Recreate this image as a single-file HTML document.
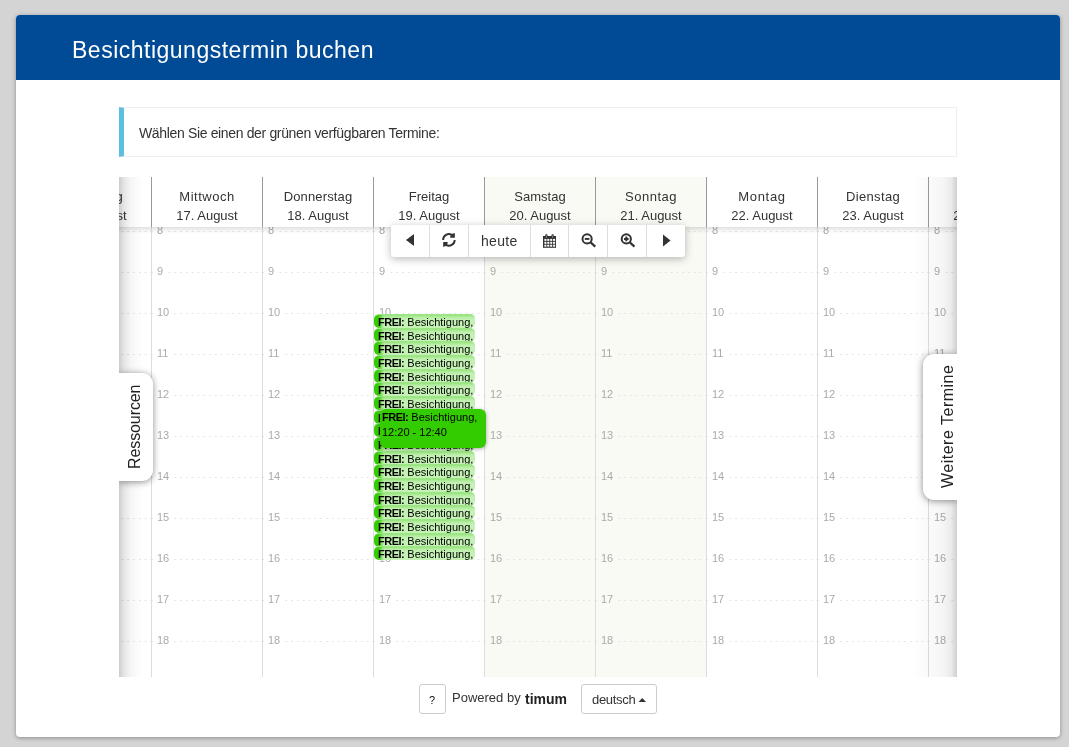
<!DOCTYPE html>
<html><head><meta charset="utf-8"><style>
*{box-sizing:border-box}
html,body{margin:0;padding:0}
body{width:1069px;height:747px;background:#d4d4d4;position:relative;overflow:hidden;will-change:transform;font-family:"Liberation Sans", sans-serif;color:#333}
.card{position:absolute;left:16px;top:15px;width:1044px;height:722px;background:#fff;border-radius:4px;box-shadow:0 1px 4px rgba(0,0,0,.35)}
.hdr{position:absolute;left:0;top:0;width:1044px;height:65px;background:#004a96;border-radius:4px 4px 0 0}
.title{position:absolute;left:56px;top:21px;font-size:23px;line-height:28px;color:#fff;white-space:nowrap;letter-spacing:0.5px}
.info{position:absolute;left:119px;top:107px;width:838px;height:50px;border:1px solid #eee;border-left:5px solid #5bc0de;background:#fff}
.info span{position:absolute;left:15px;top:16px;font-size:14px;line-height:18px;letter-spacing:-0.35px;color:#333;white-space:nowrap}
.cal{position:absolute;left:119px;top:177px;width:838px;height:500px;overflow:hidden;background:#fff}
.wk{position:absolute;top:0;width:111px;height:500px;background:#f9faf4}
.hd{position:absolute;top:0;width:111px;height:50px;border-left:1px solid #999;text-align:center;font-size:13px;color:#333}
.hd .d1{position:absolute;left:0;right:0;top:12px;line-height:16px}
.hd .d2{position:absolute;left:0;right:0;top:30.5px;line-height:16px}
.body{position:absolute;left:0;top:50px;width:838px;height:450px;overflow:hidden}
.hl{position:absolute;width:111px;height:1px;background-image:linear-gradient(to right,#e5e5e5 0,#e5e5e5 2px,transparent 2px);background-size:5.82px 1px;background-position:0 0}
.vl{position:absolute;top:0;width:1px;height:450px;background:#ddd}
.lb{position:absolute;font-size:11px;line-height:14px;color:#aaa;padding-right:3px}
.hshadow{position:absolute;left:0;top:50px;width:838px;height:7px;background:linear-gradient(to bottom,rgba(0,0,0,.12),rgba(0,0,0,.03) 4px,rgba(0,0,0,0))}
.lsh{position:absolute;left:0;top:0;width:24px;height:500px;background:linear-gradient(to right,rgba(0,0,0,.2) 0,rgba(0,0,0,.1) 5px,rgba(0,0,0,.035) 12px,rgba(0,0,0,0) 24px)}
.rsh{position:absolute;right:0;top:0;width:45px;height:500px;background:linear-gradient(to left,rgba(0,0,0,.19) 0,rgba(0,0,0,.08) 6px,rgba(0,0,0,.035) 15px,rgba(0,0,0,.015) 32px,rgba(0,0,0,0) 45px)}
.ev{position:absolute;left:255px;width:101px;height:14px;border-radius:5px;background:linear-gradient(to bottom,rgba(60,200,20,.35) 0,rgba(60,200,20,.12) 2px,rgba(60,200,20,0) 4px),linear-gradient(to right,#33cc00 0,#33cc00 4px,#c4f1b4 10px);border-top:1px solid #9be585;font-size:11px;line-height:12px;color:#000;padding-left:4px;padding-top:1px;white-space:nowrap;overflow:hidden}
.ev b,.evh b{letter-spacing:-0.5px}
.evh{position:absolute;left:261px;width:106px;height:39px;border-radius:6px;background:#33cc00;font-size:11px;line-height:14.5px;color:#000;padding-left:2px;padding-top:1px;white-space:nowrap;box-shadow:0 1px 4px rgba(0,0,0,.35)}
.tb{position:absolute;left:391px;top:225px;width:294px;height:32px;background:#fff;border-radius:3px;box-shadow:0 2px 8px rgba(0,0,0,.28)}
.tb div{position:absolute;top:0;height:32px;border-left:1px solid #ddd}
.tab{position:absolute;background:#fff;box-shadow:0 1px 7px rgba(0,0,0,.45)}
.tab span{position:absolute;font-size:16px;line-height:18px;color:#222;white-space:nowrap;transform-origin:0 0}
.btn{position:absolute;top:684px;height:30px;border:1px solid #ccc;border-radius:3px;background:#fff}
</style></head><body>
<div class="card"><div class="hdr"><div class="title">Besichtigungstermin buchen</div></div></div>
<div class="info"><span>Wählen Sie einen der grünen verfügbaren Termine:</span></div>
<div class="cal">
<div class="hd" style="left:-79px"><div class="d1" style="letter-spacing:0.35px">Dienstag</div><div class="d2">16. August</div></div><div class="hd" style="left:32px"><div class="d1" style="letter-spacing:0.5px">Mittwoch</div><div class="d2">17. August</div></div><div class="hd" style="left:143px"><div class="d1" style="letter-spacing:0.15px">Donnerstag</div><div class="d2">18. August</div></div><div class="hd" style="left:254px"><div class="d1" style="letter-spacing:0px">Freitag</div><div class="d2">19. August</div></div><div class="wk" style="left:365px"></div><div class="hd" style="left:365px"><div class="d1" style="letter-spacing:0px">Samstag</div><div class="d2">20. August</div></div><div class="wk" style="left:476px"></div><div class="hd" style="left:476px"><div class="d1" style="letter-spacing:0.5px">Sonntag</div><div class="d2">21. August</div></div><div class="hd" style="left:587px"><div class="d1" style="letter-spacing:0.7px">Montag</div><div class="d2">22. August</div></div><div class="hd" style="left:698px"><div class="d1" style="letter-spacing:0.35px">Dienstag</div><div class="d2">23. August</div></div><div class="hd" style="left:809px"><div class="d1" style="letter-spacing:0.5px">Mittwoch</div><div class="d2">24. August</div></div>
<div class="body"><div class="hl" style="top:4px;left:-79px"></div><div class="hl" style="top:4px;left:32px"></div><div class="hl" style="top:4px;left:143px"></div><div class="hl" style="top:4px;left:254px"></div><div class="hl" style="top:4px;left:365px"></div><div class="hl" style="top:4px;left:476px"></div><div class="hl" style="top:4px;left:587px"></div><div class="hl" style="top:4px;left:698px"></div><div class="hl" style="top:4px;left:809px"></div><div class="lb" style="left:-73px;top:-4px;background:#fff">8</div><div class="lb" style="left:38px;top:-4px;background:#fff">8</div><div class="lb" style="left:149px;top:-4px;background:#fff">8</div><div class="lb" style="left:260px;top:-4px;background:#fff">8</div><div class="lb" style="left:371px;top:-4px;background:#f9faf4">8</div><div class="lb" style="left:482px;top:-4px;background:#f9faf4">8</div><div class="lb" style="left:593px;top:-4px;background:#fff">8</div><div class="lb" style="left:704px;top:-4px;background:#fff">8</div><div class="lb" style="left:815px;top:-4px;background:#fff">8</div><div class="hl" style="top:45px;left:-79px"></div><div class="hl" style="top:45px;left:32px"></div><div class="hl" style="top:45px;left:143px"></div><div class="hl" style="top:45px;left:254px"></div><div class="hl" style="top:45px;left:365px"></div><div class="hl" style="top:45px;left:476px"></div><div class="hl" style="top:45px;left:587px"></div><div class="hl" style="top:45px;left:698px"></div><div class="hl" style="top:45px;left:809px"></div><div class="lb" style="left:-73px;top:37px;background:#fff">9</div><div class="lb" style="left:38px;top:37px;background:#fff">9</div><div class="lb" style="left:149px;top:37px;background:#fff">9</div><div class="lb" style="left:260px;top:37px;background:#fff">9</div><div class="lb" style="left:371px;top:37px;background:#f9faf4">9</div><div class="lb" style="left:482px;top:37px;background:#f9faf4">9</div><div class="lb" style="left:593px;top:37px;background:#fff">9</div><div class="lb" style="left:704px;top:37px;background:#fff">9</div><div class="lb" style="left:815px;top:37px;background:#fff">9</div><div class="hl" style="top:86px;left:-79px"></div><div class="hl" style="top:86px;left:32px"></div><div class="hl" style="top:86px;left:143px"></div><div class="hl" style="top:86px;left:254px"></div><div class="hl" style="top:86px;left:365px"></div><div class="hl" style="top:86px;left:476px"></div><div class="hl" style="top:86px;left:587px"></div><div class="hl" style="top:86px;left:698px"></div><div class="hl" style="top:86px;left:809px"></div><div class="lb" style="left:-73px;top:78px;background:#fff">10</div><div class="lb" style="left:38px;top:78px;background:#fff">10</div><div class="lb" style="left:149px;top:78px;background:#fff">10</div><div class="lb" style="left:260px;top:78px;background:#fff">10</div><div class="lb" style="left:371px;top:78px;background:#f9faf4">10</div><div class="lb" style="left:482px;top:78px;background:#f9faf4">10</div><div class="lb" style="left:593px;top:78px;background:#fff">10</div><div class="lb" style="left:704px;top:78px;background:#fff">10</div><div class="lb" style="left:815px;top:78px;background:#fff">10</div><div class="hl" style="top:127px;left:-79px"></div><div class="hl" style="top:127px;left:32px"></div><div class="hl" style="top:127px;left:143px"></div><div class="hl" style="top:127px;left:254px"></div><div class="hl" style="top:127px;left:365px"></div><div class="hl" style="top:127px;left:476px"></div><div class="hl" style="top:127px;left:587px"></div><div class="hl" style="top:127px;left:698px"></div><div class="hl" style="top:127px;left:809px"></div><div class="lb" style="left:-73px;top:119px;background:#fff">11</div><div class="lb" style="left:38px;top:119px;background:#fff">11</div><div class="lb" style="left:149px;top:119px;background:#fff">11</div><div class="lb" style="left:260px;top:119px;background:#fff">11</div><div class="lb" style="left:371px;top:119px;background:#f9faf4">11</div><div class="lb" style="left:482px;top:119px;background:#f9faf4">11</div><div class="lb" style="left:593px;top:119px;background:#fff">11</div><div class="lb" style="left:704px;top:119px;background:#fff">11</div><div class="lb" style="left:815px;top:119px;background:#fff">11</div><div class="hl" style="top:168px;left:-79px"></div><div class="hl" style="top:168px;left:32px"></div><div class="hl" style="top:168px;left:143px"></div><div class="hl" style="top:168px;left:254px"></div><div class="hl" style="top:168px;left:365px"></div><div class="hl" style="top:168px;left:476px"></div><div class="hl" style="top:168px;left:587px"></div><div class="hl" style="top:168px;left:698px"></div><div class="hl" style="top:168px;left:809px"></div><div class="lb" style="left:-73px;top:160px;background:#fff">12</div><div class="lb" style="left:38px;top:160px;background:#fff">12</div><div class="lb" style="left:149px;top:160px;background:#fff">12</div><div class="lb" style="left:260px;top:160px;background:#fff">12</div><div class="lb" style="left:371px;top:160px;background:#f9faf4">12</div><div class="lb" style="left:482px;top:160px;background:#f9faf4">12</div><div class="lb" style="left:593px;top:160px;background:#fff">12</div><div class="lb" style="left:704px;top:160px;background:#fff">12</div><div class="lb" style="left:815px;top:160px;background:#fff">12</div><div class="hl" style="top:209px;left:-79px"></div><div class="hl" style="top:209px;left:32px"></div><div class="hl" style="top:209px;left:143px"></div><div class="hl" style="top:209px;left:254px"></div><div class="hl" style="top:209px;left:365px"></div><div class="hl" style="top:209px;left:476px"></div><div class="hl" style="top:209px;left:587px"></div><div class="hl" style="top:209px;left:698px"></div><div class="hl" style="top:209px;left:809px"></div><div class="lb" style="left:-73px;top:201px;background:#fff">13</div><div class="lb" style="left:38px;top:201px;background:#fff">13</div><div class="lb" style="left:149px;top:201px;background:#fff">13</div><div class="lb" style="left:260px;top:201px;background:#fff">13</div><div class="lb" style="left:371px;top:201px;background:#f9faf4">13</div><div class="lb" style="left:482px;top:201px;background:#f9faf4">13</div><div class="lb" style="left:593px;top:201px;background:#fff">13</div><div class="lb" style="left:704px;top:201px;background:#fff">13</div><div class="lb" style="left:815px;top:201px;background:#fff">13</div><div class="hl" style="top:250px;left:-79px"></div><div class="hl" style="top:250px;left:32px"></div><div class="hl" style="top:250px;left:143px"></div><div class="hl" style="top:250px;left:254px"></div><div class="hl" style="top:250px;left:365px"></div><div class="hl" style="top:250px;left:476px"></div><div class="hl" style="top:250px;left:587px"></div><div class="hl" style="top:250px;left:698px"></div><div class="hl" style="top:250px;left:809px"></div><div class="lb" style="left:-73px;top:242px;background:#fff">14</div><div class="lb" style="left:38px;top:242px;background:#fff">14</div><div class="lb" style="left:149px;top:242px;background:#fff">14</div><div class="lb" style="left:260px;top:242px;background:#fff">14</div><div class="lb" style="left:371px;top:242px;background:#f9faf4">14</div><div class="lb" style="left:482px;top:242px;background:#f9faf4">14</div><div class="lb" style="left:593px;top:242px;background:#fff">14</div><div class="lb" style="left:704px;top:242px;background:#fff">14</div><div class="lb" style="left:815px;top:242px;background:#fff">14</div><div class="hl" style="top:291px;left:-79px"></div><div class="hl" style="top:291px;left:32px"></div><div class="hl" style="top:291px;left:143px"></div><div class="hl" style="top:291px;left:254px"></div><div class="hl" style="top:291px;left:365px"></div><div class="hl" style="top:291px;left:476px"></div><div class="hl" style="top:291px;left:587px"></div><div class="hl" style="top:291px;left:698px"></div><div class="hl" style="top:291px;left:809px"></div><div class="lb" style="left:-73px;top:283px;background:#fff">15</div><div class="lb" style="left:38px;top:283px;background:#fff">15</div><div class="lb" style="left:149px;top:283px;background:#fff">15</div><div class="lb" style="left:260px;top:283px;background:#fff">15</div><div class="lb" style="left:371px;top:283px;background:#f9faf4">15</div><div class="lb" style="left:482px;top:283px;background:#f9faf4">15</div><div class="lb" style="left:593px;top:283px;background:#fff">15</div><div class="lb" style="left:704px;top:283px;background:#fff">15</div><div class="lb" style="left:815px;top:283px;background:#fff">15</div><div class="hl" style="top:332px;left:-79px"></div><div class="hl" style="top:332px;left:32px"></div><div class="hl" style="top:332px;left:143px"></div><div class="hl" style="top:332px;left:254px"></div><div class="hl" style="top:332px;left:365px"></div><div class="hl" style="top:332px;left:476px"></div><div class="hl" style="top:332px;left:587px"></div><div class="hl" style="top:332px;left:698px"></div><div class="hl" style="top:332px;left:809px"></div><div class="lb" style="left:-73px;top:324px;background:#fff">16</div><div class="lb" style="left:38px;top:324px;background:#fff">16</div><div class="lb" style="left:149px;top:324px;background:#fff">16</div><div class="lb" style="left:260px;top:324px;background:#fff">16</div><div class="lb" style="left:371px;top:324px;background:#f9faf4">16</div><div class="lb" style="left:482px;top:324px;background:#f9faf4">16</div><div class="lb" style="left:593px;top:324px;background:#fff">16</div><div class="lb" style="left:704px;top:324px;background:#fff">16</div><div class="lb" style="left:815px;top:324px;background:#fff">16</div><div class="hl" style="top:373px;left:-79px"></div><div class="hl" style="top:373px;left:32px"></div><div class="hl" style="top:373px;left:143px"></div><div class="hl" style="top:373px;left:254px"></div><div class="hl" style="top:373px;left:365px"></div><div class="hl" style="top:373px;left:476px"></div><div class="hl" style="top:373px;left:587px"></div><div class="hl" style="top:373px;left:698px"></div><div class="hl" style="top:373px;left:809px"></div><div class="lb" style="left:-73px;top:365px;background:#fff">17</div><div class="lb" style="left:38px;top:365px;background:#fff">17</div><div class="lb" style="left:149px;top:365px;background:#fff">17</div><div class="lb" style="left:260px;top:365px;background:#fff">17</div><div class="lb" style="left:371px;top:365px;background:#f9faf4">17</div><div class="lb" style="left:482px;top:365px;background:#f9faf4">17</div><div class="lb" style="left:593px;top:365px;background:#fff">17</div><div class="lb" style="left:704px;top:365px;background:#fff">17</div><div class="lb" style="left:815px;top:365px;background:#fff">17</div><div class="hl" style="top:414px;left:-79px"></div><div class="hl" style="top:414px;left:32px"></div><div class="hl" style="top:414px;left:143px"></div><div class="hl" style="top:414px;left:254px"></div><div class="hl" style="top:414px;left:365px"></div><div class="hl" style="top:414px;left:476px"></div><div class="hl" style="top:414px;left:587px"></div><div class="hl" style="top:414px;left:698px"></div><div class="hl" style="top:414px;left:809px"></div><div class="lb" style="left:-73px;top:406px;background:#fff">18</div><div class="lb" style="left:38px;top:406px;background:#fff">18</div><div class="lb" style="left:149px;top:406px;background:#fff">18</div><div class="lb" style="left:260px;top:406px;background:#fff">18</div><div class="lb" style="left:371px;top:406px;background:#f9faf4">18</div><div class="lb" style="left:482px;top:406px;background:#f9faf4">18</div><div class="lb" style="left:593px;top:406px;background:#fff">18</div><div class="lb" style="left:704px;top:406px;background:#fff">18</div><div class="lb" style="left:815px;top:406px;background:#fff">18</div><div class="vl" style="left:32px"></div><div class="vl" style="left:143px"></div><div class="vl" style="left:254px"></div><div class="vl" style="left:365px"></div><div class="vl" style="left:476px"></div><div class="vl" style="left:587px"></div><div class="vl" style="left:698px"></div><div class="vl" style="left:809px"></div><div class="ev" style="top:87.00px"><b>FREI:</b>&nbsp;Besichtigung,</div><div class="ev" style="top:100.67px"><b>FREI:</b>&nbsp;Besichtigung,</div><div class="ev" style="top:114.33px"><b>FREI:</b>&nbsp;Besichtigung,</div><div class="ev" style="top:128.00px"><b>FREI:</b>&nbsp;Besichtigung,</div><div class="ev" style="top:141.67px"><b>FREI:</b>&nbsp;Besichtigung,</div><div class="ev" style="top:155.33px"><b>FREI:</b>&nbsp;Besichtigung,</div><div class="ev" style="top:169.00px"><b>FREI:</b>&nbsp;Besichtigung,</div><div class="ev" style="top:182.67px"><b>FREI:</b>&nbsp;Besichtigung,</div><div class="ev" style="top:196.33px"><b>FREI:</b>&nbsp;Besichtigung,</div><div class="ev" style="top:210.00px"><b>FREI:</b>&nbsp;Besichtigung,</div><div class="ev" style="top:223.67px"><b>FREI:</b>&nbsp;Besichtigung,</div><div class="ev" style="top:237.33px"><b>FREI:</b>&nbsp;Besichtigung,</div><div class="ev" style="top:251.00px"><b>FREI:</b>&nbsp;Besichtigung,</div><div class="ev" style="top:264.67px"><b>FREI:</b>&nbsp;Besichtigung,</div><div class="ev" style="top:278.33px"><b>FREI:</b>&nbsp;Besichtigung,</div><div class="ev" style="top:292.00px"><b>FREI:</b>&nbsp;Besichtigung,</div><div class="ev" style="top:305.67px"><b>FREI:</b>&nbsp;Besichtigung,</div><div class="ev" style="top:319.33px"><b>FREI:</b>&nbsp;Besichtigung,</div><div class="evh" style="top:182.00px"><b>FREI:</b> Besichtigung,<br>12:20 - 12:40</div></div>
<div class="hshadow"></div>
<div class="lsh"></div><div class="rsh"></div>
</div>
<div class="tb">
<div style="left:38px;width:1px"></div><div style="left:77px;width:1px"></div><div style="left:139px;width:1px"></div><div style="left:177px;width:1px"></div><div style="left:216px;width:1px"></div><div style="left:255px;width:1px"></div>
</div>
<div class="tab" style="left:119px;top:373px;width:34px;height:108px;border-radius:0 11px 11px 0;clip-path:inset(-20px -20px -20px 0)"><span style="left:7px;top:96px;transform:rotate(-90deg);letter-spacing:-0.1px">Ressourcen</span></div>
<div class="tab" style="left:923px;top:354px;width:34px;height:146px;border-radius:11px 0 0 11px;clip-path:inset(-20px 0 -20px -20px)"><span style="left:16px;top:134px;transform:rotate(-90deg);letter-spacing:0.5px">Weitere Termine</span></div>
<div class="btn" style="left:419px;width:27px"><span style="position:absolute;left:9px;top:9px;font-size:11px;line-height:13px;color:#111;font-weight:normal">?</span></div>
<div style="position:absolute;left:452px;top:690px;font-size:13px;line-height:16px;color:#333;white-space:nowrap">Powered by</div>
<div style="position:absolute;left:525px;top:690px;font-size:14px;line-height:18px;color:#222;font-weight:bold;white-space:nowrap;letter-spacing:0px">timum</div>
<div class="btn" style="left:581px;width:76px"><span style="position:absolute;left:10px;top:7px;font-size:13px;line-height:16px;color:#333;letter-spacing:-0.3px">deutsch</span>
<svg style="position:absolute;left:56px;top:11.5px" width="9" height="6" viewBox="0 0 9 6"><path d="M0.5 5 L4.25 1 L8 5 Z" fill="#333"/></svg></div>
<svg style="position:absolute;left:391px;top:225px" width="294" height="32" viewBox="391 225 294 32">
<path d="M414 234 L414 246 L406 240 Z" fill="#333"/>
<path d="M663 234.5 L663 246.5 L670.5 240.5 Z" fill="#333"/>
<path d="M443.1 239.9 A5.8 5.8 0 0 1 451.8 234.9" stroke="#333" stroke-width="1.9" fill="none"/>
<path d="M450.9 234.3 L454.8 233 L454.8 237.7 L450.1 237.7 Z" fill="#333"/>
<path d="M454.7 239.9 A5.8 5.8 0 0 1 446 244.9" stroke="#333" stroke-width="1.9" fill="none"/>
<path d="M447 245.6 L443.2 246.9 L443.2 242.1 L447.8 242.1 Z" fill="#333"/>
<rect x="543" y="236" width="13" height="11.8" fill="#333"/>
<rect x="545.3" y="234.2" width="2.2" height="4" rx="0.8" fill="#333"/><rect x="545.9" y="235.5" width="1" height="2.3" fill="#888"/>
<rect x="551.5" y="234.2" width="2.2" height="4" rx="0.8" fill="#333"/><rect x="552.1" y="235.5" width="1" height="2.3" fill="#888"/>
<g fill="#fff"><rect x="544.4" y="238.9" width="2" height="2"/><rect x="547.3" y="238.9" width="2" height="2"/><rect x="550.2" y="238.9" width="2" height="2"/><rect x="553.1" y="238.9" width="2" height="2"/>
<rect x="544.4" y="241.8" width="2" height="2"/><rect x="547.3" y="241.8" width="2" height="2"/><rect x="550.2" y="241.8" width="2" height="2"/><rect x="553.1" y="241.8" width="2" height="2"/>
<rect x="544.4" y="244.7" width="2" height="2"/><rect x="547.3" y="244.7" width="2" height="2"/><rect x="550.2" y="244.7" width="2" height="2"/><rect x="553.1" y="244.7" width="2" height="2"/></g>
<circle cx="587.1" cy="238.9" r="4.6" stroke="#333" stroke-width="2" fill="none"/>
<path d="M590.6 242.4 L595.3 246.6" stroke="#333" stroke-width="2.2"/>
<path d="M584.8 238.9 L589.4 238.9" stroke="#333" stroke-width="2"/>
<circle cx="626.3" cy="238.9" r="4.6" stroke="#333" stroke-width="2" fill="none"/>
<path d="M629.8 242.4 L634.5 246.6" stroke="#333" stroke-width="2.2"/>
<path d="M624 238.9 L628.6 238.9 M626.3 236.6 L626.3 241.2" stroke="#333" stroke-width="2"/>
</svg>
<div style="position:absolute;left:481px;top:232px;font-size:14px;line-height:18px;color:#333;letter-spacing:0.3px">heute</div>
</body></html>
